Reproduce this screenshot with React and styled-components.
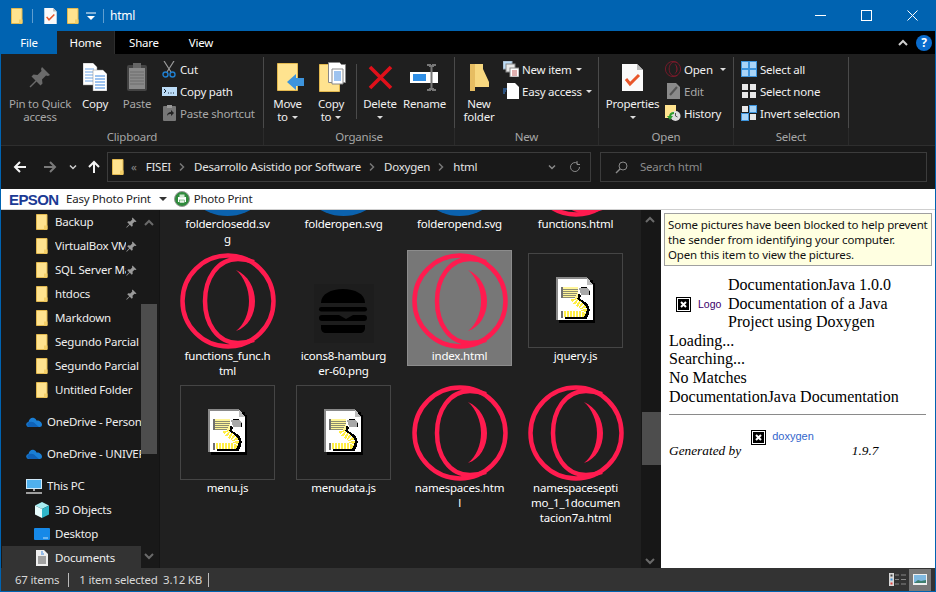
import React from "react";
import styled, { createGlobalStyle } from "styled-components";

const Global = createGlobalStyle`
  html, body { margin: 0; padding: 0; background: #000; }
  * { box-sizing: border-box; }
`;

const BLUE = "#0063b1";

const Win = styled.div`
  width: 936px;
  height: 592px;
  border: 1px solid ${BLUE};
  border-top: 0;
  display: flex;
  flex-direction: column;
  overflow: hidden;
  font-family: "Noto Sans", sans-serif;
  font-size: 11.5px;
  letter-spacing: -0.22px;
  color: #fff;
  background: #191919;
`;

const TitleBar = styled.div`
  height: 31px;
  flex: none;
  background: ${BLUE};
  display: flex;
  align-items: center;
  padding-left: 10px;
`;
const QuickSep = styled.span`
  width: 1px;
  height: 14px;
  background: #5f9ed0;
  margin: 0 ${(p) => p.$m || 11}px 0 ${(p) => p.$l || 8}px;
`;
const QuickGap = styled.span`
  width: 10px;
`;
const TitleText = styled.span`
  font-size: 12px;
  margin: -1px 0 0 -1px;
`;
const Controls = styled.div`
  margin-left: auto;
  display: flex;
`;
const Ctl = styled.div`
  width: 46px;
  height: 31px;
  display: flex;
  align-items: center;
  justify-content: center;
`;

const Tabs = styled.div`
  height: 23px;
  flex: none;
  background: #000;
  display: flex;
  align-items: stretch;
`;
const Tab = styled.div`
  width: ${(p) => p.$w}px;
  display: flex;
  align-items: center;
  justify-content: center;
  background: ${(p) => (p.$file ? BLUE : p.$on ? "#1f1f1f" : "transparent")};
  border-right: ${(p) => (p.$on ? "1px solid #2e2e2e" : "0")};
`;
const TabRight = styled.div`
  margin-left: auto;
  display: flex;
  align-items: center;
  gap: 8px;
  padding-right: 3px;
`;
const Help = styled.div`
  width: 16px;
  height: 16px;
  border-radius: 50%;
  background: #0a6ccd;
  font-weight: 700;
  font-size: 12px;
  line-height: 16px;
  text-align: center;
`;

const Ribbon = styled.div`
  height: 92px;
  flex: none;
  background: #1f1f1f;
  border-bottom: 1px solid #2e2e2e;
  display: flex;
  padding-top: 3px;
`;
const Group = styled.div`
  width: ${(p) => p.$w}px;
  display: flex;
  flex-direction: column;
`;
const GroupBody = styled.div`
  height: 71px;
  display: flex;
  padding-left: ${(p) => p.$pl || 0}px;
  border-right: 1px solid #4a4a4a;
`;
const GroupLabel = styled.div`
  height: 17px;
  line-height: 17px;
  text-align: center;
  color: #a6a6a6;
  border-right: 1px solid #2b2b2b;
`;
const Big = styled.div`
  width: ${(p) => p.$w}px;
  flex: none;
  text-align: center;
  line-height: 13px;
  color: ${(p) => (p.$dim ? "#a8a8a8" : "#f0f0f0")};
`;
const BigIcon = styled.div`
  height: 40px;
  display: flex;
  align-items: center;
  justify-content: center;
  padding-left: ${(p) => p.$pl || 0}px;
`;
const Caret = styled.span`
  display: inline-block;
  width: 0;
  height: 0;
  border: 3px solid transparent;
  border-top: 3px solid #ddd;
  border-bottom: 0;
  margin-left: ${(p) => p.$ml ?? 4}px;
  vertical-align: middle;
`;
const InnerSep = styled.div`
  width: 1px;
  height: 55px;
  margin: 7px 0 0 5px;
  background: #4a4a4a;
  flex: none;
`;
const SmallCol = styled.div`
  display: flex;
  flex-direction: column;
  padding-top: 1px;
`;
const Small = styled.div`
  height: 22px;
  display: flex;
  align-items: center;
  gap: ${(p) => p.$gap || 3}px;
  white-space: nowrap;
  color: ${(p) => (p.$dim ? "#a8a8a8" : "#f0f0f0")};
`;
const SmallIcon = styled.span`
  width: ${(p) => p.$w || 16}px;
  height: 16px;
  display: flex;
  align-items: center;
  justify-content: center;
  flex: none;
`;

const Nav = styled.div`
  height: 43px;
  flex: none;
  background: #191919;
  display: flex;
  align-items: flex-start;
  padding-top: 6px;
`;
const NavBtns = styled.div`
  width: 106px;
  height: 29px;
  display: flex;
  align-items: center;
`;
const NavBtn = styled.span`
  width: ${(p) => p.$w}px;
  display: flex;
  justify-content: center;
  flex: none;
`;
const Address = styled.div`
  width: 484px;
  height: 30px;
  border: 1px solid #3c3c3c;
  display: flex;
  align-items: center;
  padding-left: 4px;
  color: #e4e4e4;
`;
const Crumb = styled.span`
  margin-left: ${(p) => p.$ml || 0}px;
  padding-bottom: 2px;
  white-space: nowrap;
  color: ${(p) => p.$c || "inherit"};
`;
const CrumbSep = styled.span`
  margin: 0 7px 0 6px;
  display: flex;
`;
const AddressEnd = styled.div`
  margin-left: auto;
  display: flex;
  align-items: center;
  gap: 13px;
  padding-right: 9px;
`;
const Search = styled.div`
  width: 327px;
  height: 30px;
  margin-left: 9px;
  border: 1px solid #3c3c3c;
  display: flex;
  align-items: center;
  padding-left: 14px;
  gap: 12px;
  color: #8a8a8a;
`;
const SearchText = styled.span`
  padding-bottom: 2px;
`;

const EpsonBar = styled.div`
  height: 21px;
  flex: none;
  background: #fff;
  border-bottom: 1px solid #cfcfcf;
  display: flex;
  align-items: center;
  padding-left: 8px;
  color: #222;
`;
const EpsonLogo = styled.span`
  font-family: "Liberation Sans", sans-serif;
  font-weight: 700;
  font-size: 15px;
  letter-spacing: -0.6px;
  color: #1b3a94;
  width: 57px;
`;
const DarkCaret = styled(Caret)`
  border-width: 4px;
  border-top: 4px solid #333;
  border-bottom: 0;
  margin: 0 7px 0 8px;
`;
const EpsonText = styled.span`
  margin-left: ${(p) => p.$ml || 0}px;
  padding-bottom: 2px;
`;

const Main = styled.div`
  flex: 1;
  min-height: 0;
  display: flex;
`;
const Side = styled.div`
  width: 158px;
  flex: none;
  display: flex;
  background: #191919;
  overflow: hidden;
`;
const SideList = styled.div`
  width: 140px;
  flex: none;
  padding-left: 1px;
`;
const SideItem = styled.div`
  height: 24px;
  margin-top: ${(p) => p.$mt || 0}px;
  padding-left: ${(p) => p.$pl}px;
  display: flex;
  align-items: center;
  background: ${(p) => (p.$on ? "#333" : "transparent")};
`;
const SideIcon = styled.span`
  width: ${(p) => p.$w}px;
  display: flex;
  justify-content: center;
  flex: none;
  margin-right: ${(p) => p.$gap}px;
`;
const SideText = styled.span`
  white-space: nowrap;
  overflow: hidden;
  flex: 1;
  padding-bottom: 2px;
  color: #eee;
`;
const Pin = styled.span`
  width: 15px;
  flex: none;
  display: flex;
`;
const Scroll = styled.div`
  width: ${(p) => p.$w}px;
  flex: none;
  background: ${(p) => p.$bg || "#171717"};
  display: flex;
  flex-direction: column;
  align-items: stretch;
  padding-top: ${(p) => p.$pt}px;
  padding-left: ${(p) => p.$pl || 0}px;
`;
const ScrollBtn = styled.span`
  display: flex;
  margin-left: ${(p) => p.$ml}px;
`;
const Thumb = styled.div`
  height: ${(p) => p.$h}px;
  margin-top: ${(p) => p.$mt}px;
  margin-bottom: ${(p) => p.$mb}px;
  background: #4d4d4d;
`;
const Files = styled.div`
  flex: 1;
  min-width: 0;
  background: #202020;
  overflow: hidden;
  padding-left: 15px;
  border-left: 1px solid #141414;
`;
const FileGrid = styled.div`
  margin-top: -92px;
  display: grid;
  grid-template-columns: repeat(4, 105px);
  grid-auto-rows: 132px;
  column-gap: 11px;
  align-items: start;
`;
const Tile = styled.div`
  width: 105px;
  height: ${(p) => (p.$on ? "116px" : "auto")};
  border: 1px solid ${(p) => (p.$on ? "#8c8c8c" : "transparent")};
  background: ${(p) => (p.$on ? "#777" : "transparent")};
  padding: 2px 0 1px;
  text-align: center;
  line-height: 15px;
`;
const Thumbnail = styled.div`
  width: 95px;
  height: 95px;
  margin: 0 auto;
  display: flex;
  align-items: center;
  justify-content: center;
  border: ${(p) => (p.$box ? "1px solid #454545" : "0")};
  svg {
    flex: none;
  }
`;
const Line = styled.div`
  white-space: nowrap;
  color: #fff;
`;
const BurgerWrap = styled.div`
  align-self: flex-end;
  margin-bottom: 5px;
  width: 60px;
  height: 59px;
  background: #1d1d1d;
  display: flex;
`;

const Preview = styled.div`
  width: 274px;
  flex: none;
  background: #fff;
  color: #000;
  letter-spacing: 0;
  font-family: "Liberation Serif", serif;
  font-size: 16px;
  line-height: 18.6px;
  overflow: hidden;
`;
const NoticeWrap = styled.div`
  padding: 3px 3px 0;
  border-top: 1px solid #d9d9d9;
  margin-top: -1px;
`;
const Notice = styled.div`
  height: 53px;
  background: #ffffe1;
  border: 1px solid #a0a0a0;
  padding: 3px 3px;
  font-family: "Noto Sans", sans-serif;
  font-size: 11.5px;
  letter-spacing: -0.14px;
  line-height: 15px;
  color: #111;
  white-space: nowrap;
`;
const DocHead = styled.div`
  margin-top: 10px;
  display: flex;
  align-items: center;
  padding-left: 15px;
  svg {
    margin-top: 2px;
  }
`;
const LogoAlt = styled.span`
  font-family: "Liberation Sans", sans-serif;
  font-size: 10.5px;
  color: #3b006b;
  margin: 0 7px 0 7px;
  width: 23px;
`;
const DocTitle = styled.div`
  width: 190px;
`;
const DocBody = styled.div`
  padding-left: 8px;
`;
const Rule = styled.div`
  height: 1px;
  width: 257px;
  margin: 8px 0 12px;
  background: #8a8a8a;
`;
const Footer = styled.div`
  display: flex;
  height: 33px;
  font-size: 13.33px;
  font-style: italic;
  align-items: flex-end;
`;
const FootTop = styled.div`
  align-self: flex-start;
  display: flex;
  align-items: center;
  margin-left: 10px;
`;
const DoxyLink = styled.span`
  font-family: "Liberation Sans", sans-serif;
  font-style: normal;
  font-size: 11px;
  color: #3366cc;
  margin: 0 38px 3px 6px;
`;

const Status = styled.div`
  height: 23px;
  flex: none;
  background: #333;
  display: flex;
  align-items: center;
  padding-left: 14px;
  color: #d8d8d8;
`;
const StatusSep = styled.span`
  width: 1px;
  height: 14px;
  background: #bbb;
  margin: 0 10px 0 ${(p) => p.$l}px;
`;
const ViewBtns = styled.div`
  margin-left: auto;
  display: flex;
  align-items: center;
  gap: 3px;
  padding-right: 4px;
`;
const ViewOn = styled.div`
  width: 22px;
  height: 22px;
  background: #777;
  display: flex;
  align-items: center;
  justify-content: center;
`;

const Folder = ({ w = 12, h = 16 }) => (
  <svg width={w} height={h} viewBox="0 0 12 16">
    <path d="M.5.5h10.500v15H.5z" fill="#ffe38f" stroke="#e3b94f" />
    <path d="M8 15.500v-4h3.500v4z" fill="#f4cf68" />
  </svg>
);

const Opera = ({ size = 96, color = "#ff1b4f" }) => (
  <svg width={size} height={size} viewBox="0 0 96 96" fill="none">
    <circle cx="48" cy="48" r="45.500" stroke={color} strokeWidth="4.500" />
    <path d="M74 9C67 6.500 62 6 58 6C37 6 25 26 25 48C25 70 37 90 58 90C62 90 67 89.500 74 87" stroke={color} strokeWidth="4.500" />
    <path d="M56 17C68 22 75 35 75 48C75 62 68 74 56 78C64 72 69 60 69 48C69 36 64 24 56 17Z" fill={color} />
  </svg>
);

const BlueDisc = () => (
  <svg width="95" height="95" viewBox="0 0 96 96">
    <circle cx="48" cy="49" r="47" fill="#0b62ae" />
  </svg>
);

const Script = () => (
  <svg width="40" height="47" viewBox="0 0 40 47" fill="none" shapeRendering="crispEdges">
    <path d="M3 3h36v43H3z" fill="#000" />
    <path d="M0 0h31l6 8v35H0z" fill="#fff" />
    <path d="M37 0h3v6h-3zM31 0h6v3h-6z" fill="#202020" />
    <path d="M0 0h2v43H0zM0 0h31v2H0z" fill="#8a8a8a" />
    <path d="M31 0l6 8h-6z" fill="#bdbdbd" />
    <path d="M23 11h8l3 3v4h-9z" fill="#a8a8a8" />
    <path d="M25 10h6M33 14v4" stroke="#000" />
    <path d="M22 16C18 22 20 24 25 27C30 30 31 33 28 38H9" stroke="#000" strokeWidth="8" />
    <path d="M20 15C16 22 18 24 23 27C28 30 29 33 26 37H7" stroke="#ffee44" strokeWidth="6" />
    <path d="M20 15C16 22 18 24 23 27C28 30 29 33 26 37H7" stroke="#fff" strokeWidth="6" strokeDasharray="1 2" />
    <path d="M6 10h16v11H6z" fill="#fff59a" />
    <path d="M7 12h15M7 14h15M7 16h14M7 18h13M7 20h12" stroke="#8c8c70" />
    <path d="M6 10v11M6 34v7" stroke="#707070" strokeWidth="1.500" />
  </svg>
);

const Burger = () => (
  <svg width="60" height="59" viewBox="0 0 60 59">
    <path d="M7 19C7 10 17 5 29 5S51 10 51 19Z" fill="#000" />
    <rect x="5" y="23" width="48" height="4.500" rx="2.200" fill="#000" />
    <path d="M8 31H25L32 35L39 31H50A3 3 0 0 1 50 37H8A3 3 0 0 1 8 31Z" fill="#000" />
    <path d="M7 41H51V44C51 47 49 49 46 49H12C9 49 7 47 7 44Z" fill="#000" />
  </svg>
);

const Broken = () => (
  <svg width="15" height="15" viewBox="0 0 15 15">
    <rect width="15" height="15" fill="#000" />
    <rect x="1" y="1" width="13" height="13" fill="#fff" />
    <rect x="2" y="2" width="11" height="11" fill="#000" />
    <path d="M5 5l5 5M10 5l-5 5" stroke="#fff" strokeWidth="2" />
  </svg>
);

const PageCheck = ({ w = 13, h = 16, sw = 2 }) => (
  <svg width={w} height={h} viewBox="0 0 21 27">
    <path d="M0 0h15l6 6v21H0z" fill="#fafafa" />
    <path d="M15 0l6 6h-6z" fill="#bbb" />
    <path d="M4 15l4 5 9-9" fill="none" stroke="#e8562a" strokeWidth={sw + 0.6} />
  </svg>
);

const Pages = () => (
  <svg width="24" height="28" viewBox="0 0 24 28">
    <path d="M0 0h10l4 4v18H0z" fill="#fff" stroke="#888" strokeWidth=".5" />
    <path d="M2 6h9M2 9h9M2 12h9M2 15h9M2 18h9" stroke="#6ea6e8" />
    <path d="M10 7h10l4 4v17H10z" fill="#fff" stroke="#888" strokeWidth=".5" />
    <path d="M12 13h10M12 16h10M12 19h10M12 22h10M12 25h10" stroke="#3d87e0" />
  </svg>
);

const Clipboard = () => (
  <svg width="20" height="28" viewBox="0 0 20 28">
    <rect x="0" y="2" width="20" height="26" rx="2" fill="#444" />
    <rect x="2" y="5" width="16" height="21" fill="#8a8a8a" />
    <path d="M3 9h14M3 12h14M3 15h14M3 18h14M3 21h14" stroke="#6d6d6d" />
    <rect x="6" y="0" width="8" height="5" fill="#666" />
  </svg>
);

const PinIcon = ({ s = 22, c = "#6a6a6a" }) => (
  <svg width={s} height={s} viewBox="0 0 22 22">
    <path d="M13 1l8 8-2 1-2-.5-4 4 .5 4-2 2-4-4-6 6-1-1 6-6-4-4 2-2 4 .5 4-4L12 3z" fill={c} />
  </svg>
);

const Scissors = () => (
  <svg width="14" height="17" viewBox="0 0 14 17" fill="none">
    <path d="M2 0l7 11M12 0L5 11" stroke="#9a9a9a" strokeWidth="1.200" />
    <circle cx="3.500" cy="13.500" r="2.500" stroke="#1f7fd0" strokeWidth="1.400" />
    <circle cx="10.500" cy="13.500" r="2.500" stroke="#1f7fd0" strokeWidth="1.400" />
  </svg>
);

const CopyPath = () => (
  <svg width="15" height="9" viewBox="0 0 15 9">
    <rect width="15" height="9" fill="#bcdcf7" />
    <path d="M2 2l2 2-2 2M6 6h1M8.500 6h1M11 6h1" stroke="#123" fill="none" />
  </svg>
);

const PasteShortcut = () => (
  <svg width="13" height="16" viewBox="0 0 13 16">
    <rect y="1" width="13" height="15" rx="1" fill="#777" />
    <rect x="4" width="5" height="3" fill="#999" />
    <path d="M4 11c0-3 2-4 4-4V5l3 3-3 3V9c-1 0-3 0-4 2z" fill="#222" />
  </svg>
);

const MoveTo = () => (
  <svg width="27" height="28" viewBox="0 0 27 28">
    <path d="M.5.5h20v27H.5z" fill="#ffe38f" stroke="#e3b94f" />
    <path d="M10 19l9-8v4h8v8h-8v4z" fill="#3d94dc" />
  </svg>
);

const CopyTo = () => (
  <svg width="27" height="30" viewBox="0 0 27 30">
    <path d="M.5 2.500h20v27H.5z" fill="#ffe38f" stroke="#e3b94f" />
    <path d="M9.500.5h11l2 2h4v18h-17z" fill="#fff" stroke="#888" />
    <path d="M13 7h11v15H13z" fill="#fff" stroke="#888" />
    <path d="M15 10h7M15 12h7M15 14h7M15 16h7M15 18h7" stroke="#3d87e0" />
  </svg>
);

const Delete = () => (
  <svg width="25" height="25" viewBox="0 0 25 25">
    <path d="M2 2l21 21M23 2L2 23" stroke="#e0101a" strokeWidth="3.600" />
  </svg>
);

const Rename = () => (
  <svg width="29" height="27" viewBox="0 0 29 27">
    <rect y="8" width="28" height="11" fill="#fff" />
    <rect x="3" y="10" width="13" height="7" fill="#2f8fe6" />
    <path d="M17 1h3v1h3V1h3M21.500 1v25M17 26h3v-1h3v1h3" stroke="#777" strokeWidth="2" fill="none" />
  </svg>
);

const NewFolder = () => (
  <svg width="19" height="27" viewBox="0 0 19 27">
    <path d="M0 0h13v5l6 13v5H5l-5 4z" fill="#f7d77f" />
    <path d="M0 0h5v27H0z" fill="#e6bd62" />
  </svg>
);

const NewItem = () => (
  <svg width="16" height="16" viewBox="0 0 16 16">
    <rect x="0" y="0" width="9" height="8" fill="#bcdcf7" stroke="#9ab" />
    <rect x="3" y="3" width="9" height="8" fill="#e8e8e8" stroke="#888" />
    <rect x="7" y="7" width="9" height="9" fill="#fff" stroke="#888" />
    <path d="M9 10h5M9 12h5M9 14h5" stroke="#c06060" />
  </svg>
);

const EasyAccess = () => (
  <svg width="16" height="16" viewBox="0 0 16 16">
    <path d="M4 0h8l4 4v12H4z" fill="#fff" />
    <path d="M0 6h4M0 8h3M0 10h2" stroke="#3d87e0" />
  </svg>
);

const OpenEdit = () => (
  <svg width="13" height="16" viewBox="0 0 13 16">
    <path d="M0 0h9l4 4v12H0z" fill="#8a8a8a" />
    <path d="M3 12L10 4" stroke="#555" strokeWidth="2" />
  </svg>
);

const History = () => (
  <svg width="16" height="16" viewBox="0 0 16 16">
    <path d="M0 0h11v13H0z" fill="#ffe38f" />
    <circle cx="10.500" cy="11" r="5" fill="#ddd" />
    <path d="M10.500 8v3l2 1" stroke="#555" fill="none" />
    <path d="M2 11l3 4 3-4z" fill="#2e9b2e" />
    <path d="M5 12c0-3 2-4 4-4" stroke="#2e9b2e" strokeWidth="2" fill="none" />
  </svg>
);

const Squares = ({ cells }) => (
  <svg width="16" height="16" viewBox="0 0 16 16">
    {cells === "all" && <rect width="16" height="16" fill="#3d94dc" />}
    {[[1, 1], [9, 1], [1, 9], [9, 9]].map(([x, y], i) => {
      const blue = cells === "all" || (cells === "invert" && (i === 1 || i === 2));
      return (
        <g key={i}>
          {cells === "invert" && blue && <rect x={x - 1} y={y - 1} width="8" height="8" fill="#3d94dc" />}
          <rect x={x} y={y} width="6" height="6" fill={blue ? "#a9d4f7" : "#e8e8e8"} />
        </g>
      );
    })}
  </svg>
);

const Chev = ({ d = "down", c = "#7a7a7a", s = 8 }) => (
  <svg width={s + 2} height={s} viewBox="0 0 10 8" fill="none">
    <path d={d === "down" ? "M1 2l4 4 4-4" : "M1 6l4-4 4 4"} stroke={c} strokeWidth="2" />
  </svg>
);

const CrumbArrow = () => (
  <svg width="10" height="10" viewBox="0 0 10 10" fill="none">
    <path d="M3 1.500L6.500 5 3 8.500" stroke="#777" strokeWidth="1.500" />
  </svg>
);

const Arrow = ({ c, rot = 0 }) => (
  <svg width="14" height="14" viewBox="0 0 14 14" fill="none" style={{ transform: `rotate(${rot}deg)` }}>
    <path d="M13 7H2M7 2L2 7l5 5" stroke={c} strokeWidth="2" />
  </svg>
);

const OneDrive = () => (
  <svg width="16" height="10" viewBox="0 0 16 10">
    <path d="M3 10A2.500 2.500 0 0 1 2.500 5C3 2 5.500 0 8 1c1.500.5 2 1.500 2.500 2.500C13 3 16 5 16 7.500S14 10 13 10z" fill="#1a7fd6" />
    <path d="M3 10A2.500 2.500 0 0 1 2.500 5.500C5 4 8 5 9.500 7L13 10z" fill="#0f62b8" />
  </svg>
);

const Pc = () => (
  <svg width="16" height="15" viewBox="0 0 16 15">
    <rect x="0" y="0" width="16" height="10" fill="#cfe8f8" />
    <rect x="1" y="1" width="14" height="8" fill="#4fb0ee" />
    <path d="M7 10h2v2H7z" fill="#aaa" />
    <path d="M0 14h16" stroke="#ccc" strokeWidth="1.500" />
  </svg>
);

const Cube = () => (
  <svg width="16" height="16" viewBox="0 0 16 16">
    <path d="M8 0l7 3.500-7 3.500L1 3.500z" fill="#a8eef2" />
    <path d="M1 3.500L8 7v9l-7-3.500z" fill="#e6fbfc" />
    <path d="M15 3.500L8 7v9l7-3.500z" fill="#2fb6c9" />
  </svg>
);

const Desktop = () => (
  <svg width="16" height="12" viewBox="0 0 16 12">
    <rect width="16" height="12" rx="1" fill="#1689e8" />
    <path d="M9 10h5" stroke="#bfe0f8" />
  </svg>
);

const Docs = () => (
  <svg width="12" height="16" viewBox="0 0 12 16">
    <path d="M0 0h8l4 4v12H0z" fill="#eee" />
    <path d="M5 2h2M5 4h3" stroke="#3d87e0" />
    <path d="M2 7h8M2 9h8M2 11h8M2 13h8" stroke="#555" />
  </svg>
);

const GreenPrint = () => (
  <svg width="16" height="16" viewBox="0 0 16 16">
    <circle cx="8" cy="8" r="7.500" fill="#2f8a3c" stroke="#9a9a9a" />
    <rect x="4" y="6" width="8" height="5" fill="#fff" />
    <rect x="5.500" y="3.500" width="5" height="3" fill="#cfe8d0" />
    <rect x="5.500" y="9" width="5" height="3" fill="#e8f4e8" stroke="#2f8a3c" strokeWidth=".5" />
  </svg>
);

const SearchIcon = () => (
  <svg width="13" height="13" viewBox="0 0 13 13" fill="none">
    <circle cx="8" cy="5" r="4" stroke="#8a8a8a" />
    <path d="M5 8l-4 4" stroke="#8a8a8a" strokeWidth="1.500" />
  </svg>
);

const Refresh = () => (
  <svg width="12" height="12" viewBox="0 0 12 12" fill="none">
    <path d="M10.500 6A4.500 4.500 0 1 1 8.500 2.300" stroke="#8a8a8a" />
    <path d="M8 0v3.500h3" stroke="#8a8a8a" />
  </svg>
);

const DetailsIcon = () => (
  <svg width="17" height="13" viewBox="0 0 17 13">
    <rect width="5" height="13" fill="#d8d8d8" />
    <rect x="1.500" y="1.500" width="2" height="2" fill="#444" />
    <rect x="1.500" y="5.500" width="2" height="2" fill="#3d94dc" />
    <rect x="1.500" y="9.500" width="2" height="2" fill="#e04040" />
    <path d="M6 2h4M12 2h5M6 6.500h4M12 6.500h5M6 11h4M12 11h5" stroke="#888" />
  </svg>
);

const LargeIcon = () => (
  <svg width="14" height="11" viewBox="0 0 14 11">
    <rect width="14" height="11" fill="#eee" />
    <rect x="1" y="1" width="12" height="8" fill="#7fb8e0" />
    <path d="M1 9l4-3 3 1 5-1v3z" fill="#3f7f6f" />
  </svg>
);

const files = [
  { icon: "disc", lines: ["folderclosedd.sv", "g"] },
  { icon: "disc", lines: ["folderopen.svg"] },
  { icon: "disc", lines: ["folderopend.svg"] },
  { icon: "opera", lines: ["functions.html"] },
  { icon: "opera", lines: ["functions_func.h", "tml"] },
  { icon: "burger", lines: ["icons8-hamburg", "er-60.png"] },
  { icon: "opera", lines: ["index.html"], on: true },
  { icon: "script", lines: ["jquery.js"] },
  { icon: "script", lines: ["menu.js"] },
  { icon: "script", lines: ["menudata.js"] },
  { icon: "opera", lines: ["namespaces.htm", "l"] },
  { icon: "opera", lines: ["namespacesepti", "mo_1_1documen", "tacion7a.html"] },
];

const sideItems = [
  { t: "Backup", pin: true },
  { t: "VirtualBox VMs", pin: true },
  { t: "SQL Server Management", pin: true },
  { t: "htdocs", pin: true },
  { t: "Markdown" },
  { t: "Segundo Parcial" },
  { t: "Segundo Parcial" },
  { t: "Untitled Folder" },
];

const thumb = (icon) => {
  if (icon === "disc") return <BlueDisc />;
  if (icon === "opera") return <Opera />;
  if (icon === "burger") return <BurgerWrap><Burger /></BurgerWrap>;
  return <Script />;
};

export default function App() {
  return (
    <Win>
      <Global />
      <TitleBar>
        <Folder />
        <QuickSep $l={9} $m={11} />
        <PageCheck />
        <QuickGap />
        <Folder />
        <svg width="10" height="9" viewBox="0 0 10 9" style={{ margin: "2px 0 0 7px" }}>
          <path d="M0 1h10" stroke="#fff" />
          <path d="M1 4h8L5 8z" fill="#fff" />
        </svg>
        <QuickSep $l={7} $m={7} />
        <TitleText>html</TitleText>
        <Controls>
          <Ctl><svg width="11" height="1"><rect width="11" height="1" fill="#fff" /></svg></Ctl>
          <Ctl><svg width="11" height="11" fill="none"><rect x=".5" y=".5" width="10" height="10" stroke="#fff" /></svg></Ctl>
          <Ctl><svg width="11" height="11" fill="none"><path d="M.5.5l10 10M10.500.5l-10 10" stroke="#fff" /></svg></Ctl>
        </Controls>
      </TitleBar>
      <Tabs>
        <Tab $w={56} $file>File</Tab>
        <Tab $w={58} $on>Home</Tab>
        <Tab $w={58}>Share</Tab>
        <Tab $w={56}>View</Tab>
        <TabRight>
          <Chev d="up" c="#cfcfcf" />
          <Help>?</Help>
        </TabRight>
      </Tabs>
      <Ribbon>
        <Group $w={263}>
          <GroupBody $pl={2}>
            <Big $w={74} $dim><BigIcon><PinIcon /></BigIcon>Pin to Quick<br />access</Big>
            <Big $w={36}><BigIcon><Pages /></BigIcon>Copy</Big>
            <Big $w={48} $dim><BigIcon><Clipboard /></BigIcon>Paste</Big>
            <SmallCol>
              <Small><SmallIcon><Scissors /></SmallIcon>Cut</Small>
              <Small><SmallIcon><CopyPath /></SmallIcon>Copy path</Small>
              <Small $dim><SmallIcon><PasteShortcut /></SmallIcon>Paste shortcut</Small>
            </SmallCol>
          </GroupBody>
          <GroupLabel>Clipboard</GroupLabel>
        </Group>
        <Group $w={191}>
          <GroupBody>
            <Big $w={47}><BigIcon $pl={6}><MoveTo /></BigIcon>Move<br />to<Caret /></Big>
            <Big $w={40}><BigIcon $pl={3}><CopyTo /></BigIcon>Copy<br />to<Caret /></Big>
            <InnerSep />
            <Big $w={46}><BigIcon><Delete /></BigIcon>Delete<br /><Caret $ml={0} /></Big>
            <Big $w={42}><BigIcon><Rename /></BigIcon>Rename</Big>
          </GroupBody>
          <GroupLabel>Organise</GroupLabel>
        </Group>
        <Group $w={144}>
          <GroupBody>
            <Big $w={48}><BigIcon><NewFolder /></BigIcon>New<br />folder</Big>
            <SmallCol>
              <Small $gap={3}><SmallIcon><NewItem /></SmallIcon>New item<Caret $ml={1} /></Small>
              <Small $gap={3}><SmallIcon><EasyAccess /></SmallIcon>Easy access<Caret $ml={1} /></Small>
            </SmallCol>
          </GroupBody>
          <GroupLabel>New</GroupLabel>
        </Group>
        <Group $w={135}>
          <GroupBody $pl={1}>
            <Big $w={65}><BigIcon><PageCheck w={21} h={27} sw={2.4} /></BigIcon>Properties<br /><Caret $ml={0} /></Big>
            <SmallCol>
              <Small><SmallIcon><Opera size={16} color="#8f1a2e" /></SmallIcon>Open<Caret $ml={4} /></Small>
              <Small $dim><SmallIcon><OpenEdit /></SmallIcon>Edit</Small>
              <Small><SmallIcon><History /></SmallIcon>History</Small>
            </SmallCol>
          </GroupBody>
          <GroupLabel>Open</GroupLabel>
        </Group>
        <Group $w={115}>
          <GroupBody $pl={7}>
            <SmallCol>
              <Small><SmallIcon><Squares cells="all" /></SmallIcon>Select all</Small>
              <Small><SmallIcon><Squares cells="none" /></SmallIcon>Select none</Small>
              <Small><SmallIcon><Squares cells="invert" /></SmallIcon>Invert selection</Small>
            </SmallCol>
          </GroupBody>
          <GroupLabel>Select</GroupLabel>
        </Group>
      </Ribbon>
      <Nav>
        <NavBtns>
          <NavBtn $w={38}><Arrow c="#f4f4f4" /></NavBtn>
          <NavBtn $w={22}><Arrow c="#7a7a7a" rot={180} /></NavBtn>
          <NavBtn $w={23}><Chev c="#cfcfcf" s={6} /></NavBtn>
          <NavBtn $w={20}><Arrow c="#f4f4f4" rot={90} /></NavBtn>
        </NavBtns>
        <Address>
          <Folder />
          <Crumb $ml={7} $c="#888">«</Crumb>
          <Crumb $ml={9}>FISEI</Crumb>
          <CrumbSep><CrumbArrow /></CrumbSep>
          <Crumb>Desarrollo Asistido por Software</Crumb>
          <CrumbSep><CrumbArrow /></CrumbSep>
          <Crumb>Doxygen</Crumb>
          <CrumbSep><CrumbArrow /></CrumbSep>
          <Crumb>html</Crumb>
          <AddressEnd>
            <Chev c="#8a8a8a" s={6} />
            <Refresh />
          </AddressEnd>
        </Address>
        <Search>
          <SearchIcon />
          <SearchText>Search html</SearchText>
        </Search>
      </Nav>
      <EpsonBar>
        <EpsonLogo>EPSON</EpsonLogo>
        <EpsonText>Easy Photo Print</EpsonText>
        <DarkCaret />
        <GreenPrint />
        <EpsonText $ml={4}>Photo Print</EpsonText>
      </EpsonBar>
      <Main>
        <Side>
          <SideList>
            {sideItems.map((s, i) => (
              <SideItem key={i} $pl={33}>
                <SideIcon $w={13} $gap={7}><Folder /></SideIcon>
                <SideText>{s.t}</SideText>
                {s.pin && <Pin><PinIcon s={11} c="#9a9a9a" /></Pin>}
              </SideItem>
            ))}
            <SideItem $pl={24} $mt={8}><SideIcon $w={16} $gap={5}><OneDrive /></SideIcon><SideText>OneDrive - Personal</SideText></SideItem>
            <SideItem $pl={24} $mt={8}><SideIcon $w={16} $gap={5}><OneDrive /></SideIcon><SideText>OneDrive - UNIVERSIDAD</SideText></SideItem>
            <SideItem $pl={24} $mt={8}><SideIcon $w={16} $gap={5}><Pc /></SideIcon><SideText>This PC</SideText></SideItem>
            <SideItem $pl={32}><SideIcon $w={16} $gap={5}><Cube /></SideIcon><SideText>3D Objects</SideText></SideItem>
            <SideItem $pl={32}><SideIcon $w={16} $gap={5}><Desktop /></SideIcon><SideText>Desktop</SideText></SideItem>
            <SideItem $pl={33} $on><SideIcon $w={14} $gap={6}><Docs /></SideIcon><SideText>Documents</SideText></SideItem>
          </SideList>
          <Scroll $w={16} $bg="#191919" $pt={9}>
            <ScrollBtn $ml={3}><Chev d="up" c="#6a6a6a" /></ScrollBtn>
            <Thumb $h={150} $mt={77} $mb={98} />
            <ScrollBtn $ml={3}><Chev c="#6a6a6a" /></ScrollBtn>
          </Scroll>
        </Side>
        <Files>
          <FileGrid>
            {files.map((f) => (
              <Tile key={f.lines.join("")} $on={f.on}>
                <Thumbnail $box={f.icon === "script"}>{thumb(f.icon)}</Thumbnail>
                {f.lines.map((l) => <Line key={l}>{l}</Line>)}
              </Tile>
            ))}
          </FileGrid>
        </Files>
        <Scroll $w={20} $pt={6} $pl={1}>
          <ScrollBtn $ml={3}><Chev d="up" c="#6a6a6a" /></ScrollBtn>
          <Thumb $h={53} $mt={188} $mb={92} />
          <ScrollBtn $ml={3}><Chev c="#6a6a6a" /></ScrollBtn>
        </Scroll>
        <Preview>
          <NoticeWrap>
            <Notice>
              Some pictures have been blocked to help prevent<br />
              the sender from identifying your computer.<br />
              Open this item to view the pictures.
            </Notice>
          </NoticeWrap>
          <DocHead>
            <Broken />
            <LogoAlt>Logo</LogoAlt>
            <DocTitle>
              DocumentationJava 1.0.0<br />
              Documentation of a Java<br />
              Project using Doxygen
            </DocTitle>
          </DocHead>
          <DocBody>
            Loading...<br />
            Searching...<br />
            No Matches<br />
            DocumentationJava Documentation
            <Rule />
            <Footer>
              Generated by
              <FootTop>
                <Broken />
                <DoxyLink>doxygen</DoxyLink>
              </FootTop>
              1.9.7
            </Footer>
          </DocBody>
        </Preview>
      </Main>
      <Status>
        67 items
        <StatusSep $l={9} />
        1 item selected&nbsp;&nbsp;3.12 KB
        <StatusSep $l={6} />
        <ViewBtns>
          <DetailsIcon />
          <ViewOn><LargeIcon /></ViewOn>
        </ViewBtns>
      </Status>
    </Win>
  );
}
